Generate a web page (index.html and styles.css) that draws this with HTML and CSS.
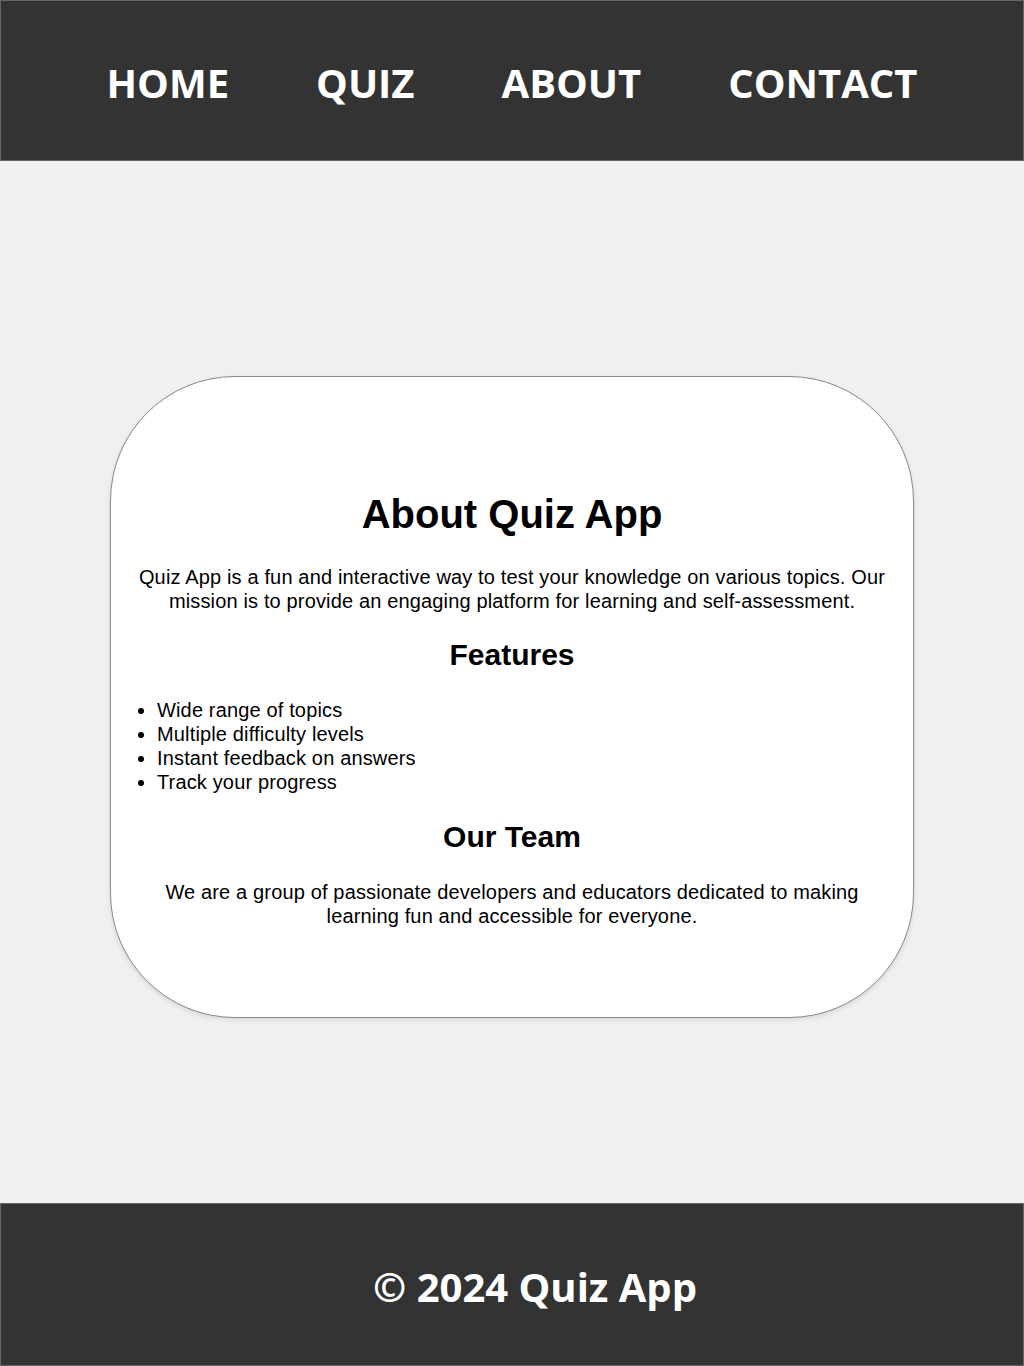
FILE: index.html
```html
<!DOCTYPE html>
<html lang="en">
<head>
    <meta charset="UTF-8">
    <meta name="viewport" content="width=device-width, initial-scale=1.0">
    <title>About - Quiz App</title>
    <link rel="stylesheet" href="styles.css">
</head>
<body>
    <header class="site-header">
        <nav>
            <ul class="nav-links">
                <li><a href="#">HOME</a></li>
                <li><a href="#">QUIZ</a></li>
                <li><a href="#">ABOUT</a></li>
                <li><a href="#">CONTACT</a></li>
            </ul>
        </nav>
    </header>

    <main class="page-content">
        <section class="about-card">
            <h1>About Quiz App</h1>
            <p>Quiz App is a fun and interactive way to test your knowledge on various topics. Our mission is to provide an engaging platform for learning and self-assessment.</p>

            <h2>Features</h2>
            <ul class="feature-list">
                <li>Wide range of topics</li>
                <li>Multiple difficulty levels</li>
                <li>Instant feedback on answers</li>
                <li>Track your progress</li>
            </ul>

            <h2>Our Team</h2>
            <p>We are a group of passionate developers and educators dedicated to making learning fun and accessible for everyone.</p>
        </section>
    </main>

    <footer class="site-footer">
        <p>&copy; 2024 Quiz App</p>
    </footer>
</body>
</html>
```

FILE: styles.css
```css
body {
    margin: 0;
    font-family: "Liberation Sans", Arial, sans-serif;
    line-height: 1.2;
    background-color: #f0f0f0;
    color: #000;
}

.site-header {
    height: 161px;
    box-sizing: border-box;
    padding-top: 4px;
    background-color: #333;
    border: 1px solid #666;
    display: flex;
    align-items: center;
    justify-content: center;
}

.nav-links {
    list-style: none;
    margin: 0;
    padding: 0;
    display: flex;
    gap: 87px;
}

.nav-links a {
    color: #fff;
    text-decoration: none;
    font-family: "Open Sans", sans-serif;
    font-weight: 700;
    font-size: 40px;
}

.page-content {
    padding: 215px 0 185px;
}

.about-card {
    width: 804px;
    box-sizing: border-box;
    margin: 0 auto;
    padding: 86px 24px 69px;
    background-color: #fff;
    border: 1px solid #888;
    border-radius: 125px;
    box-shadow: 0 2px 5px rgba(0, 0, 0, 0.1);
    text-align: center;
}

.about-card h1 {
    font-size: 40px;
    margin: 0.67em 0;
}

.about-card h2 {
    font-size: 30px;
    margin: 0.83em 0;
}

.about-card p {
    font-size: 20px;
    letter-spacing: 0.15px;
    margin: 1em 0;
}

.feature-list {
    text-align: left;
    font-size: 20px;
    letter-spacing: 0.15px;
    margin: 1em 0;
    padding-left: 22px;
}

.site-footer {
    height: 163px;
    box-sizing: border-box;
    padding: 5px 0 0 46px;
    background-color: #333;
    border: 1px solid #666;
    display: flex;
    align-items: center;
    justify-content: center;
}

.site-footer p {
    margin: 0;
    color: #fff;
    font-family: "Open Sans", sans-serif;
    font-weight: 700;
    font-size: 40px;
}
```
